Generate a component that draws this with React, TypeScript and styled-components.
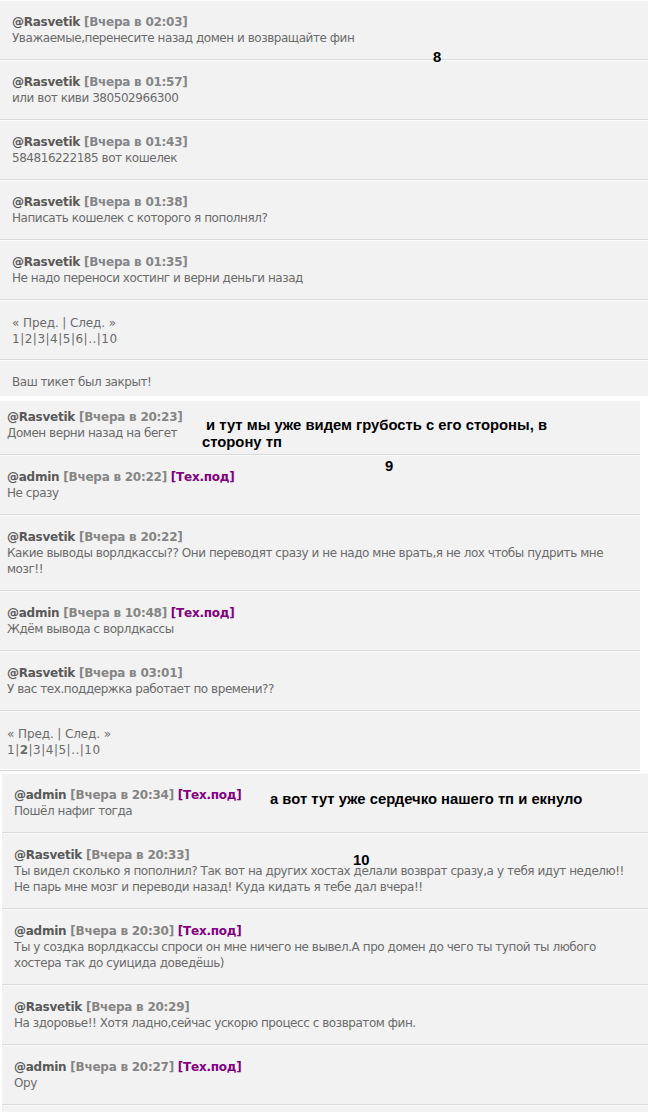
import * as React from "react";
import styled, { createGlobalStyle } from "styled-components";

const GlobalStyle = createGlobalStyle`
  html, body {
    margin: 0;
    padding: 0;
    background: #fff;
  }
  body {
    font-family: "DejaVu Sans", Verdana, sans-serif;
    font-size: 12px;
  }
`;

interface Message {
  author: string;
  time: string;
  staff?: boolean;
  lines: string[];
}

interface Note {
  x: number;
  y: number;
  lines: string[];
}

const Page = styled.div`
  display: flex;
  flex-direction: column;
  gap: 4px;
  width: 648px;
  height: 1112px;
  overflow: hidden;
`;

const Panel = styled.div<{ $width: number; $offset: number }>`
  position: relative;
  display: flex;
  flex-direction: column;
  width: ${p => p.$width}px;
  margin-left: ${p => p.$offset}px;
  background: #f2f2f2;
`;

const Row = styled.div<{ $inset: number; $top?: number; $bottom?: number; $last?: boolean }>`
  padding: ${p => p.$top ?? 13}px ${p => p.$inset}px ${p => p.$bottom ?? 13}px;
  border-top: 1px solid #fbfbfb;
  border-bottom: ${p => (p.$last ? "none" : "1px solid #d9d9d9")};
  line-height: 16px;
  color: #6b6b6b;
`;

const Header = styled.div`
  font-weight: bold;
  white-space: nowrap;
  letter-spacing: -0.25px;
`;

const Author = styled.span`
  color: #595959;
`;

const Time = styled.span`
  color: #858585;
`;

const Staff = styled.span`
  color: #800080;
`;

const Text = styled.div`
  white-space: nowrap;
  letter-spacing: -0.45px;
`;

const Pager = styled.div<{ $spread?: boolean }>`
  white-space: nowrap;
  letter-spacing: ${p => (p.$spread ? "0.5px" : "-0.1px")};
`;

const PageNum = styled.span<{ $current?: boolean }>`
  font-weight: ${p => (p.$current ? "bold" : "normal")};
`;

const Filler = styled.div`
  flex: 1;
  border-top: 1px solid #fbfbfb;
`;

const Annotation = styled.div`
  position: absolute;
  font-family: "Liberation Sans", Arial, sans-serif;
  font-weight: bold;
  font-size: 14.8px;
  line-height: 17px;
  color: #000;
  white-space: pre;
`;

const Annotations = ({ notes }: { notes: Note[] }) => (
  <>
    {notes.map((n, i) => (
      <Annotation key={i} style={{ left: n.x, top: n.y }}>
        {n.lines.join("\n")}
      </Annotation>
    ))}
  </>
);

const MessageRow = ({
  msg,
  inset,
  top
}: {
  msg: Message;
  inset: number;
  top?: number;
}) => (
  <Row $inset={inset} $top={top}>
    <Header>
      <Author>@{msg.author}</Author> <Time>[Вчера в {msg.time}]</Time>
      {msg.staff ? (
        <>
          {" "}
          <Staff>[Тех.под]</Staff>
        </>
      ) : null}
    </Header>
    {msg.lines.map((l, i) => (
      <Text key={i}>{l}</Text>
    ))}
  </Row>
);

const Pagination = ({
  inset,
  pages,
  current
}: {
  inset: number;
  pages: string[];
  current?: string;
}) => (
  <Row $inset={inset} $top={14} $bottom={12}>
    <Pager>« Пред. | След. »</Pager>
    <Pager $spread>
      {pages.map((p, i) => (
        <React.Fragment key={i}>
          {i > 0 ? "|" : null}
          <PageNum $current={p === current}>{p}</PageNum>
        </React.Fragment>
      ))}
    </Pager>
  </Row>
);

const first: Message[] = [
  { author: "Rasvetik", time: "02:03", lines: ["Уважаемые,перенесите назад домен и возвращайте фин"] },
  { author: "Rasvetik", time: "01:57", lines: ["или вот киви 380502966300"] },
  { author: "Rasvetik", time: "01:43", lines: ["584816222185 вот кошелек"] },
  { author: "Rasvetik", time: "01:38", lines: ["Написать кошелек с которого я пополнял?"] },
  { author: "Rasvetik", time: "01:35", lines: ["Не надо переноси хостинг и верни деньги назад"] }
];

const second: Message[] = [
  { author: "Rasvetik", time: "20:23", lines: ["Домен верни назад на бегет"] },
  { author: "admin", time: "20:22", staff: true, lines: ["Не сразу"] },
  {
    author: "Rasvetik",
    time: "20:22",
    lines: [
      "Какие выводы ворлдкассы?? Они переводят сразу и не надо мне врать,я не лох чтобы пудрить мне",
      "мозг!!"
    ]
  },
  { author: "admin", time: "10:48", staff: true, lines: ["Ждём вывода с ворлдкассы"] },
  { author: "Rasvetik", time: "03:01", lines: ["У вас тех.поддержка работает по времени??"] }
];

const third: Message[] = [
  { author: "admin", time: "20:34", staff: true, lines: ["Пошёл нафиг тогда"] },
  {
    author: "Rasvetik",
    time: "20:33",
    lines: [
      "Ты видел сколько я пополнил? Так вот на других хостах делали возврат сразу,а у тебя идут неделю!!",
      "Не парь мне мозг и переводи назад! Куда кидать я тебе дал вчера!!"
    ]
  },
  {
    author: "admin",
    time: "20:30",
    staff: true,
    lines: [
      "Ты у создка ворлдкассы спроси он мне ничего не вывел.А про домен до чего ты тупой ты любого",
      "хостера так до суицида доведёшь)"
    ]
  },
  { author: "Rasvetik", time: "20:29", lines: ["На здоровье!! Хотя ладно,сейчас ускорю процесс с возвратом фин."] },
  { author: "admin", time: "20:27", staff: true, lines: ["Ору"] }
];

export default function App() {
  return (
    <Page>
      <GlobalStyle />

      <Panel $width={648} $offset={0} style={{ height: 396 }}>
        {first.map((m, i) => (
          <MessageRow key={i} msg={m} inset={12} />
        ))}
        <Pagination inset={12} pages={["1", "2", "3", "4", "5", "6", "..", "10"]} />
        <Row $inset={12} $last>
          <Text>Ваш тикет был закрыт!</Text>
        </Row>
        <Annotations notes={[{ x: 433, y: 49, lines: ["8"] }]} />
      </Panel>

      <Panel $width={640} $offset={0} style={{ height: 369 }}>
        {second.map((m, i) => (
          <MessageRow key={i} msg={m} inset={7} top={i === 0 ? 8 : 13} />
        ))}
        <Pagination inset={7} pages={["1", "2", "3", "4", "5", "..", "10"]} current="2" />
        <Annotations
          notes={[
            { x: 202, y: 17, lines: [" и тут мы уже видем грубость с его стороны, в", "сторону тп"] },
            { x: 385, y: 58, lines: ["9"] }
          ]}
        />
      </Panel>

      <Panel $width={646} $offset={2} style={{ flex: 1 }}>
        {third.map((m, i) => (
          <MessageRow key={i} msg={m} inset={12} />
        ))}
        <Filler />
        <Annotations
          notes={[
            { x: 268, y: 18, lines: ["а вот тут уже сердечко нашего тп и екнуло"] },
            { x: 351, y: 79, lines: ["10"] }
          ]}
        />
      </Panel>
    </Page>
  );
}
